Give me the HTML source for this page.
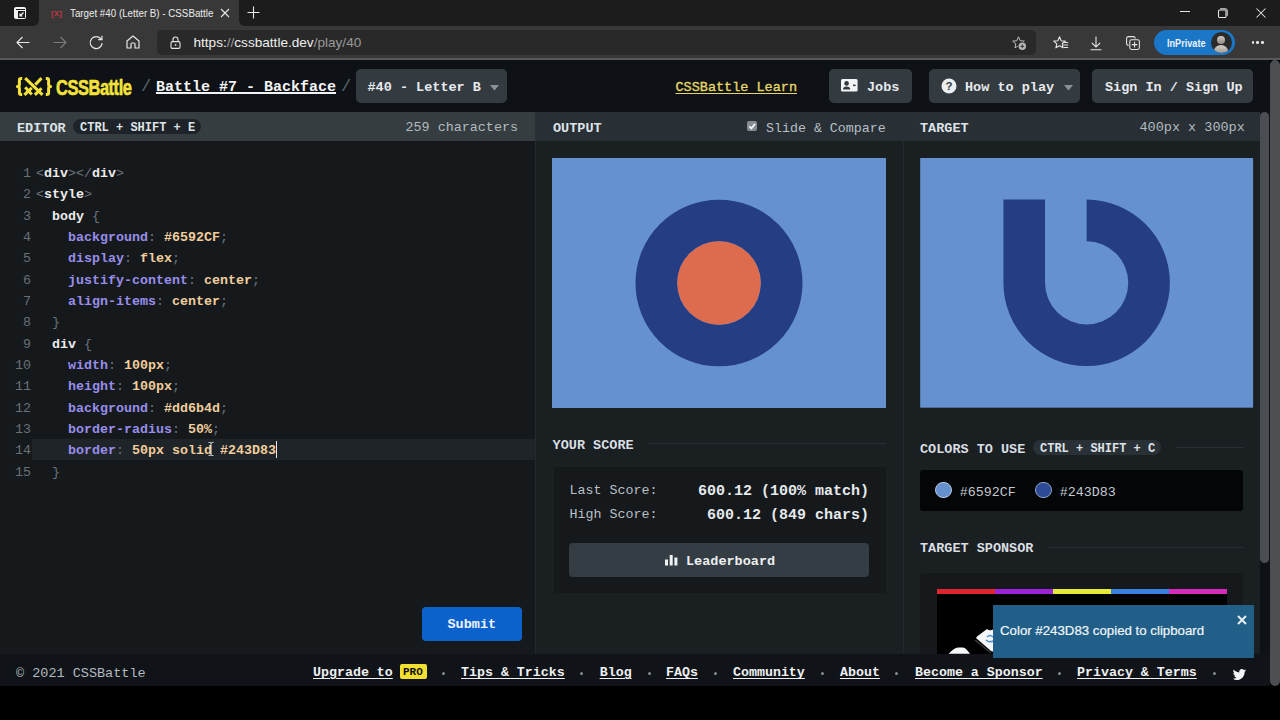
<!DOCTYPE html>
<html><head><meta charset="utf-8">
<style>
*{margin:0;padding:0;box-sizing:border-box}
html,body{width:1280px;height:720px;overflow:hidden;background:#000;font-family:"Liberation Mono",monospace;}
.a{position:absolute}
.t{position:absolute;white-space:pre;line-height:1}
.sans{font-family:"Liberation Sans",sans-serif}
svg{position:absolute;overflow:visible}
.btn{position:absolute;background:#333b41;border-radius:5px;height:34px;top:69px}
.bt{position:absolute;white-space:pre;line-height:1;font-weight:bold;color:#e8eaed;font-size:13.5px}
.ln{position:absolute;left:0;width:31px;text-align:right;color:#697076;font-size:13.33px;line-height:21.3px;white-space:pre}
.cl{position:absolute;left:36px;font-size:13.33px;line-height:21.3px;white-space:pre;color:#e6e6e6}
.p{color:#988deb;font-weight:bold}
.v{color:#f0cd9c;font-weight:bold}
.g{color:#6b737a}
.w{color:#ececec;font-weight:bold}
.fl{position:absolute;top:666.3px;white-space:pre;line-height:1;color:#eef0f2;font-weight:bold;font-size:13.3px;text-decoration:underline;text-underline-offset:2px}
.dot{position:absolute;top:672px;width:3px;height:3px;border-radius:50%;background:#858b90}
</style></head>
<body>
<!-- ===== browser chrome ===== -->
<div class="a" style="left:0;top:0;width:1280px;height:59px;background:#383838"></div>
<div class="a" style="left:0;top:0;width:39px;height:26px;background:#1c1c1c;border-bottom-right-radius:6px"></div>
<div class="a" style="left:239px;top:0;width:1041px;height:26px;background:#1c1c1c;border-bottom-left-radius:6px"></div>
<div class="a" style="left:0;top:58px;width:1280px;height:2px;background:#585858"></div>
<!-- tab actions icon -->
<div class="a" style="left:14px;top:7px;width:12px;height:12px;background:#f2f2f2;border-radius:2px"></div>
<div class="a" style="left:15.5px;top:8.5px;width:9px;height:1.5px;background:#1c1c1c"></div>
<div class="a" style="left:18px;top:11px;width:6.5px;height:6.5px;background:#1c1c1c"></div>
<svg style="left:18px;top:11px" width="7" height="7"><path d="M5.5 1.5 L2 5 M2 2.5 V5 H4.5" stroke="#f2f2f2" stroke-width="1.2" fill="none"/></svg>
<!-- favicon -->
<div class="t" style="left:50px;top:9.5px;font-size:8px;color:#c23447;font-weight:bold;letter-spacing:-0.8px">[X]</div>
<div class="t sans" style="left:70px;top:8px;font-size:10.8px;color:#ececec;transform:scaleX(0.905);transform-origin:0 0">Target #40 (Letter B) - CSSBattle</div>
<svg style="left:220px;top:8px" width="10" height="10"><path d="M1 1 L9 9 M9 1 L1 9" stroke="#e8e8e8" stroke-width="1.1"/></svg>
<svg style="left:247px;top:6px" width="13" height="13"><path d="M6.5 0.5 V12.5 M0.5 6.5 H12.5" stroke="#e8e8e8" stroke-width="1.1"/></svg>
<!-- window controls -->
<div class="a" style="left:1180px;top:10.8px;width:10px;height:1.1px;background:#e8e8e8"></div>
<svg style="left:1218px;top:8px" width="10" height="10"><path d="M2.2 0.8 H7.6 Q9.2 0.8 9.2 2.4 V7.8" stroke="#e8e8e8" fill="none" stroke-width="1"/><rect x="0.5" y="2" width="7.5" height="7.5" rx="1" stroke="#e8e8e8" fill="none" stroke-width="1.05"/></svg>
<svg style="left:1256px;top:8px" width="10" height="10"><path d="M0.5 0.5 L9.5 9.5 M9.5 0.5 L0.5 9.5" stroke="#e8e8e8" stroke-width="1.05"/></svg>
<!-- nav icons -->
<svg style="left:16px;top:36px" width="14" height="13"><path d="M13.5 6.5 H1 M6.5 1 L1 6.5 L6.5 12" stroke="#e6e6e6" stroke-width="1.2" fill="none"/></svg>
<svg style="left:53px;top:36px" width="14" height="13"><path d="M0.5 6.5 H13 M7.5 1 L13 6.5 L7.5 12" stroke="#7a7a7a" stroke-width="1.2" fill="none"/></svg>
<svg style="left:89px;top:35px" width="15" height="15"><path d="M12.2 4.2 A6 6 0 1 0 13.2 8" stroke="#e6e6e6" stroke-width="1.2" fill="none"/><path d="M13 0.8 V4.6 H9.2" stroke="#e6e6e6" stroke-width="1.2" fill="none"/></svg>
<svg style="left:126px;top:35px" width="14" height="14"><path d="M1 13 V6 L7 1 L13 6 V13 H9 V9 Q9 8 8 8 H6 Q5 8 5 9 V13 Z" stroke="#e6e6e6" stroke-width="1.2" fill="none" stroke-linejoin="round"/></svg>
<!-- address bar -->
<div class="a" style="left:157px;top:30px;width:879px;height:25px;background:#292929;border-radius:5px"></div>
<svg style="left:169.5px;top:36px" width="11" height="13"><path d="M3 5.6 V3.8 Q3 1 5.5 1 Q8 1 8 3.8 V5.6" stroke="#e6e6e6" stroke-width="1.1" fill="none"/><rect x="1" y="5.6" width="9" height="6.8" rx="1.4" stroke="#e6e6e6" stroke-width="1.1" fill="none"/><rect x="4.8" y="8.2" width="1.5" height="1.6" fill="#e6e6e6"/></svg>
<div class="t sans" style="left:193.5px;top:35.5px;font-size:13.6px;color:#f0f0f0">https:<span style="color:#9a9a9a">//</span>cssbattle.dev<span style="color:#9a9a9a">/play/40</span></div>
<!-- star plus -->
<svg style="left:1012px;top:36px" width="16" height="16"><path d="M6.5 0.8 L8.2 4.7 L12.3 5.1 L9.2 7.8 L10.1 11.8 L6.5 9.8 L2.9 11.8 L3.8 7.8 L0.7 5.1 L4.8 4.7 Z" stroke="#bdbdbd" stroke-width="1" fill="none" stroke-linejoin="round"/><circle cx="10.3" cy="10.3" r="4.6" fill="#292929"/><circle cx="10.3" cy="10.3" r="3.7" fill="#b8b8b8"/><path d="M10.3 8.4 V12.2 M8.4 10.3 H12.2" stroke="#333" stroke-width="1"/></svg>
<!-- favorites -->
<svg style="left:1052.5px;top:36px" width="16" height="14"><path d="M6.5 0.8 L8.2 4.7 L12.3 5.1 L9.2 7.8 L10.1 11.8 L6.5 9.8 L2.9 11.8 L3.8 7.8 L0.7 5.1 L4.8 4.7 Z" stroke="#e6e6e6" stroke-width="1.1" fill="none" stroke-linejoin="round"/><path d="M9.6 6.5 H15.2 M10.2 9 H15.2 M10.6 11.5 H15.2" stroke="#e6e6e6" stroke-width="1.1"/></svg>
<!-- download -->
<svg style="left:1089.8px;top:35.5px" width="12" height="15"><path d="M6 0.5 V11 M1.8 6.8 L6 11 L10.2 6.8 M0.5 13.8 H11.5" stroke="#e6e6e6" stroke-width="1.1" fill="none"/></svg>
<!-- collections -->
<svg style="left:1126px;top:35.5px" width="14" height="14"><path d="M2.6 9.5 Q0.6 9.5 0.6 7.5 V2.6 Q0.6 0.6 2.6 0.6 H7.2 Q9.2 0.6 9.2 2.6" stroke="#e6e6e6" stroke-width="1.05" fill="none"/><rect x="3.8" y="3.8" width="9.6" height="9.6" rx="1.8" stroke="#e6e6e6" stroke-width="1.05" fill="none"/><path d="M8.6 5.8 V11.4 M5.8 8.6 H11.4" stroke="#e6e6e6" stroke-width="1.05"/></svg>
<!-- inprivate -->
<div class="a" style="left:1154px;top:30px;width:81px;height:25px;background:#1a76c6;border-radius:13px"></div>
<div class="t sans" style="left:1167px;top:38.5px;font-size:10.3px;font-weight:bold;color:#eaf3fb;transform:scaleX(0.885);transform-origin:0 0">InPrivate</div>
<div class="a" style="left:1211px;top:32px;width:21px;height:21px;background:#2b2b2b;border-radius:50%;overflow:hidden">
  <div class="a" style="left:5.5px;top:3.5px;width:8px;height:8.5px;border-radius:50%;background:linear-gradient(#d0c8c0,#8f8a85)"></div>
  <div class="a" style="left:2.5px;top:12.5px;width:14px;height:12px;border-radius:50%;background:linear-gradient(#d5cfc8,#8a8580)"></div>
</div>
<div class="a" style="left:1251.5px;top:41px;width:2.7px;height:2.7px;border-radius:50%;background:#e6e6e6"></div>
<div class="a" style="left:1256.3px;top:41px;width:2.7px;height:2.7px;border-radius:50%;background:#e6e6e6"></div>
<div class="a" style="left:1261px;top:41px;width:2.7px;height:2.7px;border-radius:50%;background:#e6e6e6"></div>
<!-- ===== page ===== -->
<div class="a" style="left:0;top:60px;width:1270px;height:626px;background:#0e1115"></div>
<!-- page scrollbar -->
<div class="a" style="left:1270px;top:60px;width:10px;height:626px;background:#4c4f52;border-radius:5px 5px 5px 5px"></div>
<!-- logo -->
<svg style="left:16px;top:77px" width="36" height="19" viewBox="0 0 36 19">
  <g fill="none" stroke="#f4e23c" stroke-width="3" stroke-linecap="butt" stroke-linejoin="round">
    <path d="M6.2 1.5 H5.2 Q3.4 1.5 3.4 3.3 V7.6 Q3.4 9.5 1.4 9.5 Q3.4 9.5 3.4 11.4 V15.7 Q3.4 17.5 5.2 17.5 H6.2"/>
    <path d="M29.8 1.5 H30.8 Q32.6 1.5 32.6 3.3 V7.6 Q32.6 9.5 34.6 9.5 Q32.6 9.5 32.6 11.4 V15.7 Q32.6 17.5 30.8 17.5 H29.8"/>
    <path d="M9.2 1.1 L26.5 17.9"/>
    <path d="M25.5 1.1 L19.3 7.6"/>
    <path d="M15.8 10.8 L8.4 17.9"/>
    <path d="M9.2 10.3 L15.8 17.4"/>
    <path d="M18.9 17.9 L25.5 11.3"/>
  </g>
</svg>
<div class="t sans" style="left:56px;top:77px;font-size:22.5px;font-weight:bold;color:#f4e23c;-webkit-text-stroke:0.6px #f4e23c;transform:scaleX(0.73);transform-origin:0 0;letter-spacing:-0.6px">CSSBattle</div>
<div class="t" style="left:141px;top:78px;font-size:17px;color:#5c636a">/</div>
<div class="t" style="left:156px;top:79.5px;font-size:15px;font-weight:bold;color:#f2f3f4;text-decoration:underline;text-underline-offset:1px;text-decoration-thickness:1.5px">Battle #7 - Backface</div>
<div class="t" style="left:341px;top:78px;font-size:17px;color:#5c636a">/</div>
<div class="btn" style="left:356px;width:151px"></div>
<div class="bt" style="left:367.5px;top:80.5px">#40 - Letter B</div>
<svg style="left:490px;top:84.5px" width="10" height="6"><path d="M0 0 H9 L4.5 5.5 Z" fill="#8a939b"/></svg>
<div class="t" style="left:675.5px;top:80.5px;font-size:13.5px;color:#e4d768;-webkit-text-stroke:0.35px #e4d768;text-decoration:underline;text-underline-offset:2px">CSSBattle Learn</div>
<div class="btn" style="left:829px;width:83px"></div>
<svg style="left:841.3px;top:79.3px" width="17" height="13"><rect x="0" y="0" width="16.6" height="12.6" rx="1.5" fill="#f2f4f5"/><circle cx="5.6" cy="4.4" r="2.3" fill="#333b41"/><path d="M1.9 10.6 Q2.1 7.6 5.6 7.6 Q9.1 7.6 9.3 10.6 Z" fill="#333b41"/><rect x="12" y="5.6" width="2.6" height="1.5" fill="#333b41"/></svg>
<div class="bt" style="left:867px;top:80.5px">Jobs</div>
<div class="btn" style="left:929px;width:151px"></div>
<svg style="left:941px;top:78px" width="16" height="16"><circle cx="8" cy="8" r="7.5" fill="#eceef0"/><text x="8" y="12.3" text-anchor="middle" font-family="Liberation Sans" font-weight="bold" font-size="11.5" fill="#333b41">?</text></svg>
<div class="bt" style="left:965px;top:80.5px">How to play</div>
<svg style="left:1063.5px;top:84.5px" width="10" height="6"><path d="M0 0 H9 L4.5 5.5 Z" fill="#8a939b"/></svg>
<div class="btn" style="left:1092px;width:161px"></div>
<div class="bt" style="left:1105px;top:80.5px">Sign In / Sign Up</div>

<!-- ===== panel headers ===== -->
<div class="a" style="left:0;top:112px;width:535px;height:29px;background:#353d41"></div>
<div class="a" style="left:535px;top:112px;width:369px;height:29px;background:#283036"></div>
<div class="a" style="left:904px;top:112px;width:356px;height:29px;background:#283036"></div>
<div class="bt" style="left:17px;top:121.5px;color:#dde2e7">EDITOR</div>
<div class="a" style="left:73px;top:119px;width:128px;height:15px;background:#1d2328;border-radius:8px"></div>
<div class="t" style="left:80px;top:122px;font-size:12px;font-weight:bold;color:#dfe3e7">CTRL + SHIFT + E</div>
<div class="t" style="left:405.5px;top:121px;font-size:13.4px;color:#b3babf">259 characters</div>
<div class="bt" style="left:553px;top:121.5px;color:#dde2e7">OUTPUT</div>
<div class="a" style="left:747px;top:120.5px;width:10.3px;height:10.3px;background:#858b90;border-radius:2px"></div>
<svg style="left:747px;top:120.5px" width="10.3" height="10.3"><path d="M2.3 5.4 L4.3 7.4 L8.1 2.9" stroke="#f4f6f8" stroke-width="1.7" fill="none"/></svg>
<div class="t" style="left:766px;top:122px;font-size:13.3px;color:#b8bfc5">Slide &amp; Compare</div>
<div class="bt" style="left:920px;top:121.5px;color:#dde2e7">TARGET</div>
<div class="t" style="left:1139.5px;top:121px;font-size:13.5px;color:#b3babf">400px x 300px</div>

<!-- ===== editor ===== -->
<div class="a" style="left:0;top:141px;width:535px;height:513px;background:#15191c"></div>
<div class="a" style="left:32px;top:438.5px;width:503px;height:21.3px;background:#1f2428"></div>
<div class="a" style="left:535px;top:141px;width:1px;height:513px;background:#23292d"></div>
<div class="ln" style="top:163.00px">1</div>
<div class="cl" style="top:163.00px"><span class="g">&lt;</span><span class="w">div</span><span class="g">&gt;&lt;/</span><span class="w">div</span><span class="g">&gt;</span></div>
<div class="ln" style="top:184.33px">2</div>
<div class="cl" style="top:184.33px"><span class="g">&lt;</span><span class="w">style</span><span class="g">&gt;</span></div>
<div class="ln" style="top:205.66px">3</div>
<div class="cl" style="top:205.66px">  <span class="w">body</span> <span class="g">{</span></div>
<div class="ln" style="top:226.99px">4</div>
<div class="cl" style="top:226.99px">    <span class="p">background</span><span class="g">:</span> <span class="v">#6592CF</span><span class="g">;</span></div>
<div class="ln" style="top:248.32px">5</div>
<div class="cl" style="top:248.32px">    <span class="p">display</span><span class="g">:</span> <span class="v">flex</span><span class="g">;</span></div>
<div class="ln" style="top:269.65px">6</div>
<div class="cl" style="top:269.65px">    <span class="p">justify-content</span><span class="g">:</span> <span class="v">center</span><span class="g">;</span></div>
<div class="ln" style="top:290.98px">7</div>
<div class="cl" style="top:290.98px">    <span class="p">align-items</span><span class="g">:</span> <span class="v">center</span><span class="g">;</span></div>
<div class="ln" style="top:312.31px">8</div>
<div class="cl" style="top:312.31px">  <span class="g">}</span></div>
<div class="ln" style="top:333.64px">9</div>
<div class="cl" style="top:333.64px">  <span class="w">div</span> <span class="g">{</span></div>
<div class="ln" style="top:354.97px">10</div>
<div class="cl" style="top:354.97px">    <span class="p">width</span><span class="g">:</span> <span class="v">100px</span><span class="g">;</span></div>
<div class="ln" style="top:376.30px">11</div>
<div class="cl" style="top:376.30px">    <span class="p">height</span><span class="g">:</span> <span class="v">100px</span><span class="g">;</span></div>
<div class="ln" style="top:397.63px">12</div>
<div class="cl" style="top:397.63px">    <span class="p">background</span><span class="g">:</span> <span class="v">#dd6b4d</span><span class="g">;</span></div>
<div class="ln" style="top:418.96px">13</div>
<div class="cl" style="top:418.96px">    <span class="p">border-radius</span><span class="g">:</span> <span class="v">50%</span><span class="g">;</span></div>
<div class="ln" style="top:440.29px">14</div>
<div class="cl" style="top:440.29px">    <span class="p">border</span><span class="g">:</span> <span class="v">50px solid #243D83</span></div>
<div class="ln" style="top:461.62px">15</div>
<div class="cl" style="top:461.62px">  <span class="g">}</span></div>
<div class="a" style="left:276px;top:441px;width:1.3px;height:17px;background:#e8e8e8"></div>
<!-- I-beam mouse -->
<svg style="left:207.5px;top:441.5px" width="6" height="14"><path d="M0.5 0.5 H2 Q3 0.5 3 1.5 V12.5 Q3 13.5 2 13.5 H0.5 M5.5 0.5 H4 Q3 0.5 3 1.5 M3 12.5 Q3 13.5 4 13.5 H5.5" stroke="#e0e0e0" stroke-width="0.9" fill="none"/></svg>
<!-- submit -->
<div class="a" style="left:422px;top:607px;width:100px;height:33.5px;background:#0c62cc;border-radius:4px"></div>
<div class="t" style="left:447.5px;top:618px;font-size:13.5px;font-weight:bold;color:#eef4fb">Submit</div>

<!-- ===== output panel ===== -->
<div class="a" style="left:536px;top:141px;width:367px;height:513px;background:#1a1f22"></div>
<div class="a" style="left:903px;top:141px;width:1px;height:513px;background:#23292d"></div>
<div class="a" style="left:904px;top:141px;width:356px;height:513px;background:#1a1f22"></div>
<svg style="left:552.2px;top:157.8px" width="334" height="250" viewBox="0 0 400 300" preserveAspectRatio="none">
  <rect width="400" height="300" fill="#6592CF"/>
  <circle cx="200" cy="150" r="75" fill="none" stroke="#243D83" stroke-width="50"/>
  <circle cx="200" cy="150" r="50" fill="#dd6b4d"/>
</svg>
<div class="bt" style="left:552.6px;top:438.8px;color:#d9dee3">YOUR SCORE</div>
<div class="a" style="left:648px;top:443px;width:238px;height:1px;background:#2a3035"></div>
<div class="a" style="left:553.6px;top:467.3px;width:332.4px;height:126px;background:#15191c;border-radius:3px"></div>
<div class="t" style="left:569.6px;top:484.2px;font-size:13.33px;color:#b9bfc5">Last Score:</div>
<div class="t" style="left:569.6px;top:508.2px;font-size:13.33px;color:#b9bfc5">High Score:</div>
<div class="t" style="left:698px;top:484px;font-size:15px;font-weight:bold;color:#e6e9ec">600.12 (100% match)</div>
<div class="t" style="left:707px;top:508px;font-size:15px;font-weight:bold;color:#e6e9ec">600.12 (849 chars)</div>
<div class="a" style="left:569.2px;top:543px;width:300.2px;height:34.4px;background:#343d44;border-radius:4px"></div>
<svg style="left:665px;top:553.8px" width="14" height="12"><rect x="0" y="5.5" width="3" height="6" fill="#eef0f2"/><rect x="4.7" y="1" width="3" height="10.5" fill="#eef0f2"/><rect x="9.4" y="3.5" width="3" height="8" fill="#eef0f2"/></svg>
<div class="bt" style="left:686px;top:555px;color:#eef0f2">Leaderboard</div>

<!-- ===== target panel ===== -->
<svg style="left:920px;top:157.8px" width="333.3" height="249.7" viewBox="0 0 400 300">
  <rect width="400" height="300" fill="#6592CF"/>
  <path d="M200 50 A100 100 0 1 1 100 150 L100 50 L150 50 L150 150 A50 50 0 1 0 200 100 Z" fill="#243D83"/>
</svg>
<div class="bt" style="left:920px;top:443px;color:#d9dee3">COLORS TO USE</div>
<div class="a" style="left:1033px;top:440.2px;width:127.5px;height:15px;background:#2a3136;border-radius:8px"></div>
<div class="t" style="left:1040px;top:443.2px;font-size:12px;font-weight:bold;color:#dfe3e7">CTRL + SHIFT + C</div>
<div class="a" style="left:1176px;top:446.8px;width:68px;height:1px;background:#2a3035"></div>
<div class="a" style="left:920px;top:469.7px;width:323px;height:41px;background:#040506;border-radius:3px"></div>
<div class="a" style="left:935.2px;top:481.8px;width:16.5px;height:16.5px;border-radius:50%;background:#6592CF;border:1px solid #b5c6e0"></div>
<div class="t" style="left:959.7px;top:485.5px;font-size:13.33px;color:#c3c9ce">#6592CF</div>
<div class="a" style="left:1035px;top:481.8px;width:16.5px;height:16.5px;border-radius:50%;background:#2d4a95;border:1px solid #8f9fc6"></div>
<div class="t" style="left:1059.8px;top:485.5px;font-size:13.33px;color:#c3c9ce">#243D83</div>
<div class="bt" style="left:920px;top:541.8px;color:#d9dee3">TARGET SPONSOR</div>
<div class="a" style="left:1048.7px;top:546.5px;width:194.3px;height:1px;background:#2a3035"></div>
<div class="a" style="left:920px;top:573.2px;width:323px;height:90px;background:#15191c;border-radius:3px"></div>
<div class="a" style="left:936.5px;top:589px;width:58px;height:5px;background:#e0252e"></div>
<div class="a" style="left:994.5px;top:589px;width:58px;height:5px;background:#9d22d6"></div>
<div class="a" style="left:1052.5px;top:589px;width:58px;height:5px;background:#e6e83a"></div>
<div class="a" style="left:1110.5px;top:589px;width:58px;height:5px;background:#3a80e0"></div>
<div class="a" style="left:1168.5px;top:589px;width:58px;height:5px;background:#d52bba"></div>
<div class="a" style="left:936.5px;top:594px;width:290px;height:62px;background:#000"></div>
<svg style="left:936px;top:600px" width="64" height="60"><path d="M40 38 Q41 36 43 35 L51 29 Q53 31 56 30 L58 29 V52 L55 51 Z" fill="#f6f7f8"/><path d="M39 40 L55 53" stroke="#3a3d40" stroke-width="1.2"/><path d="M51 37 Q54 34 57 37 M50 40 Q53 43 57 41" stroke="#4b8fd8" stroke-width="1.5" fill="none"/><path d="M12.5 53.8 Q18 48 22 47.5 H27 Q30 48 34 53.8 Z" fill="#f6f7f8"/></svg>
<!-- right panel scroll thumb -->
<div class="a" style="left:1260px;top:112px;width:9px;height:451px;background:#4a4e52;border-radius:5px"></div>

<!-- ===== footer ===== -->
<div class="a" style="left:0;top:654px;width:1270px;height:32px;background:#101317"></div>
<div class="t" style="left:16px;top:667px;font-size:13.5px;color:#b3bac1">© 2021 CSSBattle</div>
<div class="fl" style="left:313px">Upgrade to</div>
<div class="a" style="left:400px;top:664px;width:27px;height:15px;background:#f1e02f;border-radius:2px"></div>
<div class="t" style="left:403px;top:667px;font-size:11px;font-weight:bold;color:#111">PRO</div>
<div class="dot" style="left:442px"></div>
<div class="fl" style="left:461px">Tips &amp; Tricks</div>
<div class="dot" style="left:580px"></div>
<div class="fl" style="left:599.7px">Blog</div>
<div class="dot" style="left:647.5px"></div>
<div class="fl" style="left:666px">FAQs</div>
<div class="dot" style="left:714px"></div>
<div class="fl" style="left:733px">Community</div>
<div class="dot" style="left:821px"></div>
<div class="fl" style="left:840px">About</div>
<div class="dot" style="left:895px"></div>
<div class="fl" style="left:915px">Become a Sponsor</div>
<div class="dot" style="left:1058px"></div>
<div class="fl" style="left:1077px">Privacy &amp; Terms</div>
<div class="dot" style="left:1213px"></div>
<svg style="left:1233px;top:668.8px" width="13.2" height="11.2" viewBox="0 0 24 20" preserveAspectRatio="none"><path d="M23.6 2.4c-.9.4-1.8.6-2.8.8 1-.6 1.8-1.5 2.1-2.7-.9.6-2 1-3.1 1.2C18.9.7 17.6.1 16.2.1c-2.7 0-4.9 2.2-4.9 4.9 0 .4 0 .8.1 1.1C7.3 5.9 3.7 4 1.3 1 .9 1.7.6 2.6.6 3.5c0 1.7.9 3.2 2.2 4.1-.8 0-1.6-.2-2.2-.6v.1c0 2.4 1.7 4.4 3.9 4.8-.4.1-.8.2-1.3.2-.3 0-.6 0-.9-.1.6 2 2.4 3.4 4.6 3.4-1.7 1.3-3.8 2.1-6.1 2.1-.4 0-.8 0-1.2-.1 2.2 1.4 4.8 2.2 7.5 2.2 9.1 0 14-7.5 14-14v-.6c1-.7 1.8-1.6 2.5-2.5z" fill="#f2f4f6"/></svg>
<!-- toast -->
<div class="a" style="left:993px;top:604.5px;width:260.6px;height:53.2px;background:#215f88"></div>
<div class="t sans" style="left:1000px;top:624px;font-size:13.6px;color:#f2f6f9;-webkit-text-stroke:0.2px #f2f6f9;transform:scaleX(0.975);transform-origin:0 0">Color #243D83 copied to clipboard</div>
<svg style="left:1237px;top:614.5px" width="10" height="10"><path d="M1 1 L9 9 M9 1 L1 9" stroke="#e8eef3" stroke-width="2"/></svg>

</body></html>
